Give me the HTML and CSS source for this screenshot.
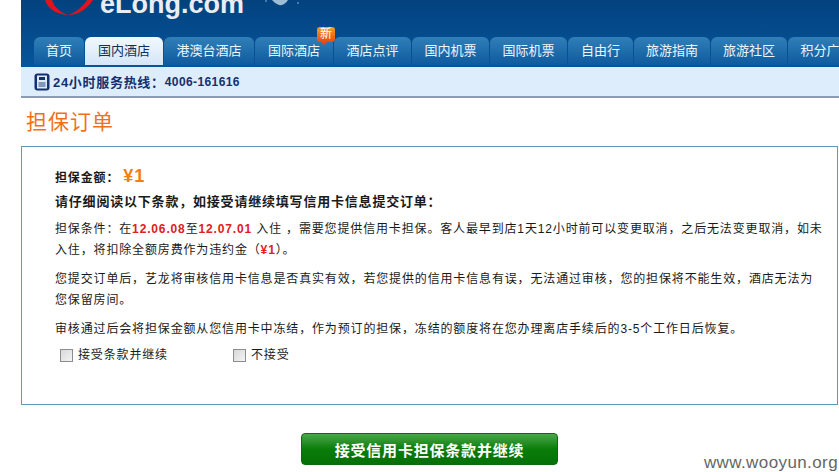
FILE: index.html
```html
<!DOCTYPE html>
<html lang="zh-CN">
<head>
  <meta charset="UTF-8">
  <title>担保订单</title>
  <link rel="stylesheet" href="styles.css">
</head>
<body>
  <div id="header">
    <div id="logo-row">
      <svg class="logo-mark" width="60" height="16" viewBox="0 0 60 16">
        <path d="M2 0 C5 9 13 14 25 15 C17 12 11 7 9 0 Z" fill="#e0141c"/>
        <path d="M25 15 C35 15 44 9 50 0 L44 0 C40 6 34 12 25 15 Z" fill="#e0141c"/>
      </svg>
      <span class="logo-text">eLong.com</span>
      <svg class="cloud" width="52" height="8" viewBox="0 0 52 8">
        <path d="M8 0 L24 0 C22 3 19 6 15 5 C12 4 10 2 8 0 Z" fill="#b9d2e6" opacity="0.85"/>
        <circle cx="34" cy="3" r="1" fill="#b9d2e6" opacity="0.5"/>
        <circle cx="2" cy="1" r="1" fill="#b9d2e6" opacity="0.5"/>
      </svg>
    </div>
    <ul id="nav">
      <li class="tab w50">首页</li>
      <li class="tab w78 active">国内酒店</li>
      <li class="tab w90">港澳台酒店</li>
      <li class="tab w78">国际酒店<span class="badge">新</span></li>
      <li class="tab w77">酒店点评</li>
      <li class="tab w77">国内机票</li>
      <li class="tab w77">国际机票</li>
      <li class="tab w65">自由行</li>
      <li class="tab w76">旅游指南</li>
      <li class="tab w76">旅游社区</li>
      <li class="tab w77">积分广场</li>
    </ul>
  </div>
  <div id="subnav">
    <svg class="phone" width="16" height="18" viewBox="0 0 16 18">
      <rect x="0.5" y="0.5" width="15" height="17" rx="3" fill="#14306e"/>
      <rect x="3" y="2.5" width="10" height="13" fill="#dfeaf7"/>
      <rect x="5" y="4" width="6" height="3" fill="#14306e"/>
      <rect x="4.5" y="9" width="7" height="5" fill="#7f97bd"/>
    </svg>
    <span>24小时服务热线：</span><span class="tel">4006-161616</span>
  </div>

  <h1 id="title">担保订单</h1>

  <div id="box">
    <p class="amount">担保金额：<span class="price">¥1</span></p>
    <p class="strong">请仔细阅读以下条款，如接受请继续填写信用卡信息提交订单：</p>
    <p class="para first-para">担保条件：在<b class="red">12.06.08</b>至<b class="red">12.07.01</b> 入住 ，需要您提供信用卡担保。客人最早到店1天12小时前可以变更取消，之后无法变更取消，如未入住，将扣除全额房费作为违约金（<b class="red">¥1</b>）。</p>
    <p class="para">您提交订单后，艺龙将审核信用卡信息是否真实有效，若您提供的信用卡信息有误，无法通过审核，您的担保将不能生效，酒店无法为您保留房间。</p>
    <p class="para">审核通过后会将担保金额从您信用卡中冻结，作为预订的担保，冻结的额度将在您办理离店手续后的3-5个工作日后恢复。</p>
    <div class="choices">
      <label class="choice first"><span class="check"></span>接受条款并继续</label>
      <label class="choice"><span class="check"></span>不接受</label>
    </div>
  </div>

  <div id="actions">
    <button id="continue">接受信用卡担保条款并继续</button>
  </div>
  <div id="watermark">www.wooyun.org</div>
</body>
</html>
```

FILE: styles.css
```css
html, body {
  margin: 0;
  padding: 0;
  height: 472px;
  overflow: hidden;
  background: #fff;
  font-family: "Liberation Sans", "Noto Sans CJK SC", sans-serif;
  font-size: 12px;
  color: #222;
}

/* Cabecera azul */
#header {
  margin-left: 21px;
  height: 67px;
  background: linear-gradient(#03427f, #06559b);
  overflow: hidden;
}
#logo-row {
  display: flex;
  align-items: flex-start;
  height: 37px;
  padding-left: 22px;
}
.logo-mark {
  flex: none;
}
.logo-text {
  margin: -12px 0 0 -3px;
  font-size: 27px;
  line-height: 32px;
  font-weight: bold;
  color: #e8eef4;
}
.cloud {
  margin-left: 20px;
}

#nav {
  display: flex;
  gap: 1px;
  list-style: none;
  margin: 0;
  padding: 0 0 0 13px;
  white-space: nowrap;
}
.tab {
  flex: none;
  height: 28px;
  line-height: 28px;
  text-align: center;
  border-radius: 6px 6px 0 0;
  background: linear-gradient(#307fb8, #0e5a9e);
  color: #eef5fb;
  font-size: 13px;
  position: relative;
}
.tab.active {
  background: linear-gradient(#f2f8fd, #d4e6f7);
  color: #10305f;
}
.w50 { width: 50px; }
.w65 { width: 65px; }
.w76 { width: 76px; }
.w77 { width: 77px; }
.w78 { width: 78px; }
.w90 { width: 90px; }

/* Insignia "nuevo" sobre la pestana */
.badge {
  position: absolute;
  top: -10px;
  right: -2px;
  width: 18px;
  height: 15px;
  line-height: 15px;
  border-radius: 3px;
  background: linear-gradient(#f4a020, #ea4a12);
  color: #fff;
  font-size: 12px;
}
.badge::after {
  content: "";
  position: absolute;
  left: 4px;
  top: 15px;
  border: 3px solid transparent;
  border-top-color: #ea4a12;
}

#subnav {
  display: flex;
  align-items: center;
  margin-left: 21px;
  height: 29px;
  padding-left: 13px;
  background: #deedfc;
  border-bottom: 2px solid #8b9bb3;
  color: #14306e;
  font-weight: bold;
  font-size: 13px;
  letter-spacing: 0.7px;
}
.phone {
  margin-right: 3px;
}
.tel {
  font-size: 12px;
  letter-spacing: 0.4px;
}

#title {
  margin: 12px 0 0 26px;
  font-size: 21px;
  line-height: 24px;
  font-weight: normal;
  letter-spacing: 1px;
  color: #f0701a;
}

#box {
  margin: 12px 0 0 21px;
  width: 782px;
  height: 236px;
  padding: 21px 0 0 33px;
  border: 1px solid #5b9cbc;
  line-height: 21px;
  letter-spacing: 0.85px;
  color: #1a1a1a;
}
#box p {
  margin: 0;
}
#box .amount {
  display: flex;
  align-items: center;
  height: 20px;
  font-weight: bold;
  font-size: 12px;
}
.price {
  margin: -3px 0 0 4px;
  font-size: 18px;
  color: #f08010;
}
#box .strong {
  margin-top: 3px;
  font-weight: bold;
  font-size: 13px;
  letter-spacing: 0.8px;
}
#box .para {
  margin-top: 8px;
  width: 770px;
}
#box .first-para {
  margin-top: 7px;
}
.red {
  color: #e0201c;
}
.choices {
  display: flex;
  height: 22px;
  margin: 4px 0 0 5px;
}
.choice {
  display: flex;
  align-items: center;
  gap: 5px;
}
.choice.first {
  width: 173px;
}
.check {
  width: 11px;
  height: 11px;
  border: 1px solid #8d8d8d;
  background: linear-gradient(135deg, #d8d8d8, #f4f4f4);
}

#actions {
  display: flex;
  justify-content: center;
  margin: 27px 0 0 21px;
  width: 817px;
}
#continue {
  width: 257px;
  height: 32px;
  margin-top: 1px;
  border: 1px solid #0c6a0c;
  border-radius: 4px;
  background: linear-gradient(#4da64d, #0a7d0a 50%, #067006);
  color: #fff;
  font-family: inherit;
  font-size: 15px;
  font-weight: bold;
  letter-spacing: 0.8px;
  padding: 0;
}

#watermark {
  position: absolute;
  right: 1px;
  bottom: -1px;
  font-size: 17px;
  letter-spacing: 0.4px;
  color: #666;
}
```
